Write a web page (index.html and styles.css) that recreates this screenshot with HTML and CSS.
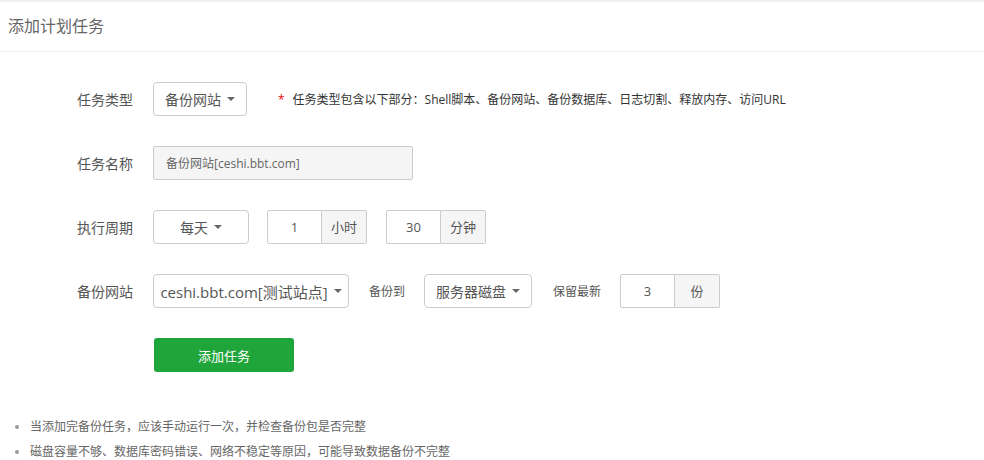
FILE: index.html
```html
<!DOCTYPE html>
<html>
<head>
	<meta charset="UTF-8">
	<title>添加计划任务</title>
	<link rel="stylesheet" href="styles.css">
</head>
<body>
	<div class="panel">
		<div class="panel-hd">添加计划任务</div>
		<div class="panel-bd">
			<div class="line">
				<span class="tname">任务类型</span>
				<div class="sel w-type">备份网站<i class="caret"></i></div>
				<span class="tips"><em>*</em>任务类型包含以下部分：Shell脚本、备份网站、备份数据库、日志切割、释放内存、访问URL</span>
			</div>
			<div class="line">
				<span class="tname">任务名称</span>
				<input class="bt-input name-input" type="text" value="备份网站[ceshi.bbt.com]" disabled>
			</div>
			<div class="line">
				<span class="tname">执行周期</span>
				<div class="sel w-cycle">每天<i class="caret"></i></div>
				<div class="input-group">
					<input class="bt-input" type="text" value="1">
					<span class="addon">小时</span>
				</div>
				<div class="input-group">
					<input class="bt-input" type="text" value="30">
					<span class="addon">分钟</span>
				</div>
			</div>
			<div class="line">
				<span class="tname">备份网站</span>
				<div class="sel w-site">ceshi.bbt.com[测试站点]<i class="caret"></i></div>
				<span class="sub-label">备份到</span>
				<div class="sel w-disk">服务器磁盘<i class="caret"></i></div>
				<span class="sub-label keep">保留最新</span>
				<div class="input-group">
					<input class="bt-input" type="text" value="3">
					<span class="addon">份</span>
				</div>
			</div>
			<div class="line">
				<span class="tname"></span>
				<button class="btn-success" type="button">添加任务</button>
			</div>
		</div>
		<ul class="help">
			<li>当添加完备份任务，应该手动运行一次，并检查备份包是否完整</li>
			<li>磁盘容量不够、数据库密码错误、网络不稳定等原因，可能导致数据备份不完整</li>
		</ul>
	</div>
</body>
</html>
```

FILE: styles.css
```css
html, body {margin:0; padding:0; background:#fff;}
body {font-family:"Open Sans", "Noto Sans CJK SC", sans-serif; color:#555; font-size:14px; border-top:2px solid #f0f0f0;}
input, button {font-family:inherit;}

.panel-hd {height:49px; line-height:49px; padding-left:8px; font-size:16px; color:#666; border-bottom:1px solid #eee;}
.panel-bd {padding:30px 0 0;}
	.line {display:flex; align-items:center; height:34px; margin-bottom:30px;}
	.line:nth-child(2) {margin-top:1px;}
	.tname {width:153px; text-align:right; padding-right:20px; box-sizing:border-box; flex:none;}
	.sel {display:flex; align-items:center; justify-content:center; height:34px; box-sizing:border-box; border:1px solid #ccc; border-radius:4px; color:#555; flex:none;}
	.caret {display:inline-block; width:0; height:0; margin-left:6px; border-top:4px solid #666; border-left:4px solid transparent; border-right:4px solid transparent;}
	.w-type {width:94px;}
	.w-cycle {width:96px; margin-right:18px;}
	.w-site {width:196px; font-size:15px;}
	.w-disk {width:108px;}
	.tips {margin-left:31px; font-size:12px; color:#333;}
	.tips em {font-style:normal; color:#ef0808; margin-right:8px;}
	.sub-label {margin:0 19px 0 20px; font-size:12px; color:#555;}
	.keep {margin:0 19px 0 21px;}

.bt-input {height:34px; box-sizing:border-box; border:1px solid #ccc; padding:0 12px; font-size:13px; color:#555; background:#fff; outline:none;}
.name-input {width:260px; font-size:12px; color:#666; background:#f5f5f5; border-radius:2px;}
.input-group {display:flex; margin-right:19px;}
	.input-group .bt-input {width:55px; text-align:center; border-radius:2px 0 0 2px;}
	.input-group .addon {width:45px; height:34px; box-sizing:border-box; line-height:32px; text-align:center; font-size:13px; color:#555; background:#f5f5f5; border:1px solid #ccc; border-left:0; border-radius:0 2px 2px 0;}

.btn-success {width:140px; height:34px; margin-left:1px; border:0; border-radius:3px; background:#20a53a; color:#fff; font-size:13px; cursor:pointer;}

.help {margin:42px 0 0; padding:0 0 0 30px; font-size:12px; color:#666; line-height:25px;}
.help li::marker {color:#999;}
```
